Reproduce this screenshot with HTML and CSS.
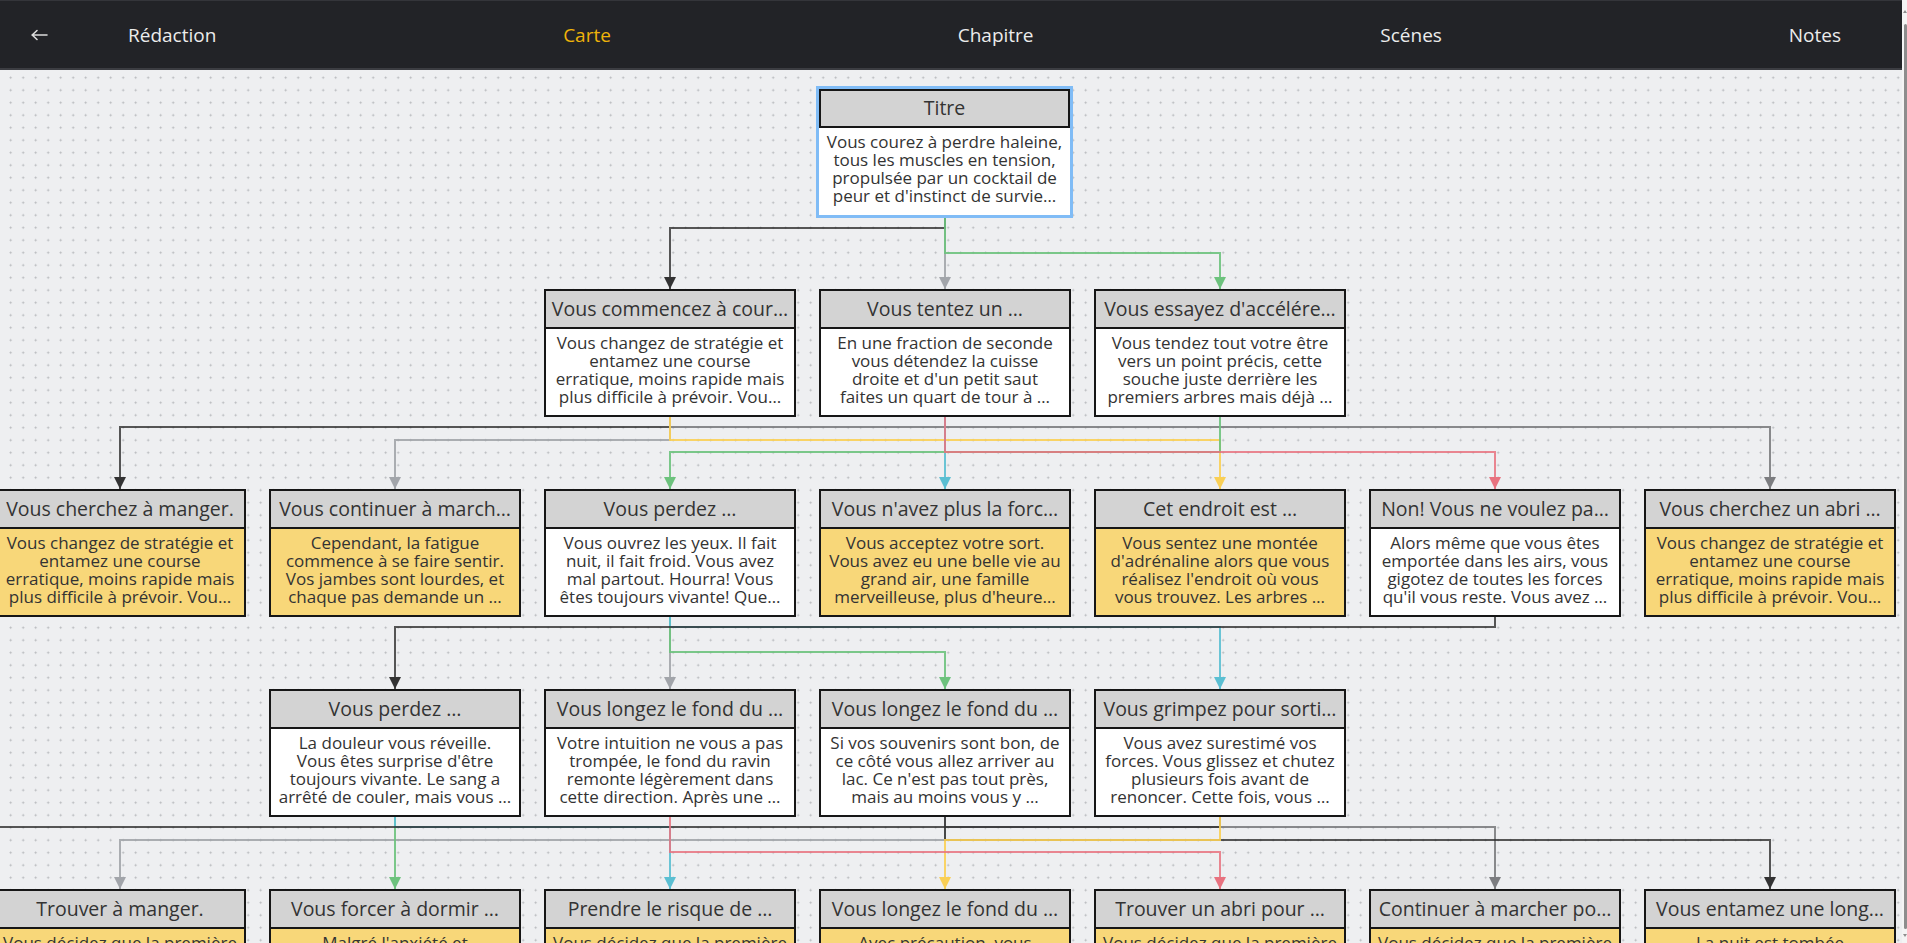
FILE: index.html
```html
<!DOCTYPE html>
<html lang="fr">
<head>
<meta charset="utf-8">
<title>Carte</title>
<link rel="stylesheet" href="styles.css">
</head>
<body>
<div class="app">
  <div class="main">
    <header class="topbar">
      <button class="back" aria-label="Retour">
        <svg width="18" height="12" viewBox="0 0 18 12"><path d="M17 6H2M7 1.5L2.2 6L7 10.5" fill="none" stroke="#dcdcdc" stroke-width="1.6" stroke-linecap="round" stroke-linejoin="round"/></svg>
      </button>
      <nav class="tabs">
        <a class="tab">Rédaction</a>
        <a class="tab tab--active">Carte</a>
        <a class="tab">Chapitre</a>
        <a class="tab">Scénes</a>
        <a class="tab">Notes</a>
      </nav>
    </header>

    <section class="canvas">
      <svg class="edges" width="1902" height="880" viewBox="0 0 1902 880">
        <defs>
          <marker id="m-black" viewBox="0 0 12 12" refX="12" refY="6" markerWidth="12" markerHeight="12" markerUnits="userSpaceOnUse" orient="auto"><path d="M0 0L12 6L0 12Z" fill="#333"/></marker>
          <marker id="m-gray-l" viewBox="0 0 12 12" refX="12" refY="6" markerWidth="12" markerHeight="12" markerUnits="userSpaceOnUse" orient="auto"><path d="M0 0L12 6L0 12Z" fill="#a2a5aa"/></marker>
          <marker id="m-gray-d" viewBox="0 0 12 12" refX="12" refY="6" markerWidth="12" markerHeight="12" markerUnits="userSpaceOnUse" orient="auto"><path d="M0 0L12 6L0 12Z" fill="#7c7d80"/></marker>
          <marker id="m-green" viewBox="0 0 12 12" refX="12" refY="6" markerWidth="12" markerHeight="12" markerUnits="userSpaceOnUse" orient="auto"><path d="M0 0L12 6L0 12Z" fill="#6dc27d"/></marker>
          <marker id="m-yellow" viewBox="0 0 12 12" refX="12" refY="6" markerWidth="12" markerHeight="12" markerUnits="userSpaceOnUse" orient="auto"><path d="M0 0L12 6L0 12Z" fill="#f9cf55"/></marker>
          <marker id="m-red" viewBox="0 0 12 12" refX="12" refY="6" markerWidth="12" markerHeight="12" markerUnits="userSpaceOnUse" orient="auto"><path d="M0 0L12 6L0 12Z" fill="#e8727f"/></marker>
          <marker id="m-cyan" viewBox="0 0 12 12" refX="12" refY="6" markerWidth="12" markerHeight="12" markerUnits="userSpaceOnUse" orient="auto"><path d="M0 0L12 6L0 12Z" fill="#5bbfd2"/></marker>
        </defs>

        <!-- Titre -> rang 2 -->
        <path class="e e-gray-l" d="M945 148V219" marker-end="url(#m-gray-l)"/>
        <path class="e e-black" d="M945 148V158H670V219" marker-end="url(#m-black)"/>
        <path class="e e-green" d="M945 148V183H1220V219" marker-end="url(#m-green)"/>

        <!-- rang 2 -> rang 3 -->
        <path class="e e-gray-d" d="M670 347V357H1770V419" marker-end="url(#m-gray-d)"/>
        <path class="e e-black" d="M670 347V357H120V419" marker-end="url(#m-black)"/>
        <path class="e e-gray-l" d="M670 347V370H395V419" marker-end="url(#m-gray-l)"/>
        <path class="e e-yellow" d="M670 347V370H1220V419" marker-end="url(#m-yellow)"/>
        <path class="e e-cyan" d="M945 347V419" marker-end="url(#m-cyan)"/>
        <path class="e e-green" d="M1220 347V382H670V419" marker-end="url(#m-green)"/>
        <path class="e e-red" d="M945 347V382H1495V419" marker-end="url(#m-red)"/>

        <!-- rang 3 -> rang 4 -->
        <path class="e e-gray-l" d="M670 547V619" marker-end="url(#m-gray-l)"/>
        <path class="e e-green" d="M670 547V582H945V619" marker-end="url(#m-green)"/>
        <path class="e e-cyan" d="M670 547V557H1220V619" marker-end="url(#m-cyan)"/>
        <path class="e e-black" d="M1495 547V557H395V619" marker-end="url(#m-black)"/>

        <!-- rang 4 -> rang 5 -->
        <path class="e e-gray-d" d="M945 747V757H1495V819" marker-end="url(#m-gray-d)"/>
        <path class="e e-gray-l" d="M945 747V770H120V819" marker-end="url(#m-gray-l)"/>
        <path class="e e-green" d="M395 747V819" marker-end="url(#m-green)"/>
        <path class="e e-cyan" d="M395 747V757H670V819" marker-end="url(#m-cyan)"/>
        <path class="e e-black" d="M1220 747V757H-20"/>
        <path class="e e-black" d="M945 747V770H1770V819" marker-end="url(#m-black)"/>
        <path class="e e-yellow" d="M1220 747V770H945V819" marker-end="url(#m-yellow)"/>
        <path class="e e-red" d="M670 747V782H1220V819" marker-end="url(#m-red)"/>
      </svg>

      <!-- Rang 1 -->
      <div class="node node--selected">
        <div class="node-title">Titre</div>
        <div class="node-body">Vous courez à perdre haleine,<br>tous les muscles en tension,<br>propulsée par un cocktail de<br>peur et d'instinct de survie…</div>
      </div>

      <!-- Rang 2 -->
      <div class="node col-c row-2">
        <div class="node-title">Vous commencez à cour…</div>
        <div class="node-body">Vous changez de stratégie et<br>entamez une course<br>erratique, moins rapide mais<br>plus difficile à prévoir. Vou…</div>
      </div>
      <div class="node col-d row-2">
        <div class="node-title">Vous tentez un …</div>
        <div class="node-body">En une fraction de seconde<br>vous détendez la cuisse<br>droite et d'un petit saut<br>faites un quart de tour à …</div>
      </div>
      <div class="node col-e row-2">
        <div class="node-title">Vous essayez d'accélére…</div>
        <div class="node-body">Vous tendez tout votre être<br>vers un point précis, cette<br>souche juste derrière les<br>premiers arbres mais déjà …</div>
      </div>

      <!-- Rang 3 -->
      <div class="node node--draft col-a row-3">
        <div class="node-title">Vous cherchez à manger.</div>
        <div class="node-body">Vous changez de stratégie et<br>entamez une course<br>erratique, moins rapide mais<br>plus difficile à prévoir. Vou…</div>
      </div>
      <div class="node node--draft col-b row-3">
        <div class="node-title">Vous continuer à march…</div>
        <div class="node-body">Cependant, la fatigue<br>commence à se faire sentir.<br>Vos jambes sont lourdes, et<br>chaque pas demande un …</div>
      </div>
      <div class="node col-c row-3">
        <div class="node-title">Vous perdez …</div>
        <div class="node-body">Vous ouvrez les yeux. Il fait<br>nuit, il fait froid. Vous avez<br>mal partout. Hourra! Vous<br>êtes toujours vivante! Que…</div>
      </div>
      <div class="node node--draft col-d row-3">
        <div class="node-title">Vous n'avez plus la forc…</div>
        <div class="node-body">Vous acceptez votre sort.<br>Vous avez eu une belle vie au<br>grand air, une famille<br>merveilleuse, plus d'heure…</div>
      </div>
      <div class="node node--draft col-e row-3">
        <div class="node-title">Cet endroit est …</div>
        <div class="node-body">Vous sentez une montée<br>d'adrénaline alors que vous<br>réalisez l'endroit où vous<br>vous trouvez. Les arbres …</div>
      </div>
      <div class="node col-f row-3">
        <div class="node-title">Non! Vous ne voulez pa…</div>
        <div class="node-body">Alors même que vous êtes<br>emportée dans les airs, vous<br>gigotez de toutes les forces<br>qu'il vous reste. Vous avez …</div>
      </div>
      <div class="node node--draft col-g row-3">
        <div class="node-title">Vous cherchez un abri …</div>
        <div class="node-body">Vous changez de stratégie et<br>entamez une course<br>erratique, moins rapide mais<br>plus difficile à prévoir. Vou…</div>
      </div>

      <!-- Rang 4 -->
      <div class="node col-b row-4">
        <div class="node-title">Vous perdez …</div>
        <div class="node-body">La douleur vous réveille.<br>Vous êtes surprise d'être<br>toujours vivante. Le sang a<br>arrêté de couler, mais vous …</div>
      </div>
      <div class="node col-c row-4">
        <div class="node-title">Vous longez le fond du …</div>
        <div class="node-body">Votre intuition ne vous a pas<br>trompée, le fond du ravin<br>remonte légèrement dans<br>cette direction. Après une …</div>
      </div>
      <div class="node col-d row-4">
        <div class="node-title">Vous longez le fond du …</div>
        <div class="node-body">Si vos souvenirs sont bon, de<br>ce côté vous allez arriver au<br>lac. Ce n'est pas tout près,<br>mais au moins vous y …</div>
      </div>
      <div class="node col-e row-4">
        <div class="node-title">Vous grimpez pour sorti…</div>
        <div class="node-body">Vous avez surestimé vos<br>forces. Vous glissez et chutez<br>plusieurs fois avant de<br>renoncer. Cette fois, vous …</div>
      </div>

      <!-- Rang 5 -->
      <div class="node node--draft col-a row-5">
        <div class="node-title">Trouver à manger.</div>
        <div class="node-body">Vous décidez que la première</div>
      </div>
      <div class="node node--draft col-b row-5">
        <div class="node-title">Vous forcer à dormir …</div>
        <div class="node-body">Malgré l'anxiété et</div>
      </div>
      <div class="node node--draft col-c row-5">
        <div class="node-title">Prendre le risque de …</div>
        <div class="node-body">Vous décidez que la première</div>
      </div>
      <div class="node node--draft col-d row-5">
        <div class="node-title">Vous longez le fond du …</div>
        <div class="node-body">Avec précaution, vous</div>
      </div>
      <div class="node node--draft col-e row-5">
        <div class="node-title">Trouver un abri pour …</div>
        <div class="node-body">Vous décidez que la première</div>
      </div>
      <div class="node node--draft col-f row-5">
        <div class="node-title">Continuer à marcher po…</div>
        <div class="node-body">Vous décidez que la première</div>
      </div>
      <div class="node node--draft col-g row-5">
        <div class="node-title">Vous entamez une long…</div>
        <div class="node-body">La nuit est tombée</div>
      </div>
    </section>
  </div>

  <div class="scrollbar">
    <span class="sb-arrow sb-arrow--up"></span>
    <span class="sb-thumb"></span>
    <span class="sb-arrow sb-arrow--down"></span>
  </div>
</div>
</body>
</html>
```

FILE: styles.css
```css
html, body {
  margin: 0;
  height: 100%;
  overflow: hidden;
}

body {
  font-family: "Open Sans", "Noto Sans", sans-serif;
  background: #eeeff1;
}

.app {
  display: flex;
  height: 100vh;
}

.main {
  flex: 1;
  min-width: 0;
  display: flex;
  flex-direction: column;
}

/* ---------- barre du haut ---------- */
.topbar {
  flex: none;
  height: 70px;
  box-sizing: border-box;
  border-top: 1px solid #34353a;
  border-bottom: 2px solid #3c3d42;
  background: #222327;
  display: flex;
  align-items: center;
  padding: 0 61px 0 30px;
}

.back {
  width: 18px;
  height: 12px;
  padding: 0;
  border: 0;
  background: none;
  display: flex;
}

.tabs {
  flex: 1;
  display: flex;
  justify-content: space-between;
  margin-left: 80px;
}

.tab {
  color: #ececec;
  font-size: 19px;
  text-decoration: none;
}

.tab--active {
  color: #efb30a;
}

/* ---------- carte ---------- */
.canvas {
  flex: 1;
  position: relative;
  overflow: hidden;
  background-color: #eeeff1;
  background-image: radial-gradient(circle, #b4b6ba 0.8px, transparent 1.2px);
  background-size: 12.5px 12.5px;
  background-position: 4.45px 1.45px;
}

.edges {
  position: absolute;
  left: 0;
  top: 0;
  overflow: visible;
}

.e {
  fill: none;
  stroke-width: 2px;
  stroke-opacity: 0.9;
}
.e-black  { stroke: #2e2e2e; stroke-opacity: 0.8; }
.e-gray-l { stroke: #a2a5aa; }
.e-gray-d { stroke: #7c7d80; }
.e-green  { stroke: #6dc27d; }
.e-yellow { stroke: #f9cf55; }
.e-red    { stroke: #e8727f; stroke-opacity: 0.85; }
.e-cyan   { stroke: #5bbfd2; }

/* ---------- noeuds ---------- */
.node {
  position: absolute;
  width: 252px;
  height: 128px;
  box-sizing: border-box;
  border: 2px solid #161616;
  background: #ffffff;
  display: flex;
  flex-direction: column;
  color: #333333;
}

.node-title {
  flex: none;
  height: 38px;
  box-sizing: border-box;
  border-bottom: 2px solid #161616;
  background: #d3d3d3;
  font-size: 19.5px;
  line-height: 35px;
  text-align: center;
  white-space: nowrap;
  overflow: hidden;
  text-overflow: ellipsis;
  padding: 0 4px;
}

.node-body {
  flex: 1;
  padding-top: 5px;
  font-size: 17px;
  line-height: 18px;
  text-align: center;
  white-space: nowrap;
  overflow: hidden;
}

.node--draft .node-body {
  background: #f8d779;
}

.node--selected {
  left: 816px;
  top: 16px;
  width: 257px;
  height: 132px;
  border: 3px solid #80bcf6;
}

.node--selected .node-title {
  height: 39px;
  border: 2px solid #161616;
  line-height: 34px;
}

.col-a { left: -6px; }
.col-b { left: 269px; }
.col-c { left: 544px; }
.col-d { left: 819px; }
.col-e { left: 1094px; }
.col-f { left: 1369px; }
.col-g { left: 1644px; }

.row-2 { top: 219px; }
.row-3 { top: 419px; }
.row-4 { top: 619px; }
.row-5 { top: 819px; }

/* ---------- barre de défilement ---------- */
.scrollbar {
  flex: none;
  width: 5px;
  position: relative;
  background: #f4f4f4;
}

.sb-thumb {
  position: absolute;
  top: 24px;
  bottom: 14px;
  right: 0;
  width: 3px;
  border-radius: 2px;
  background: #8d8d8d;
}

.sb-arrow {
  position: absolute;
  right: 0;
  width: 0;
  height: 0;
  border-left: 2px solid transparent;
  border-right: 2px solid transparent;
}

.sb-arrow--up {
  top: 10px;
  border-bottom: 3px solid #8d8d8d;
}

.sb-arrow--down {
  bottom: 6px;
  border-top: 3px solid #8d8d8d;
}
```
